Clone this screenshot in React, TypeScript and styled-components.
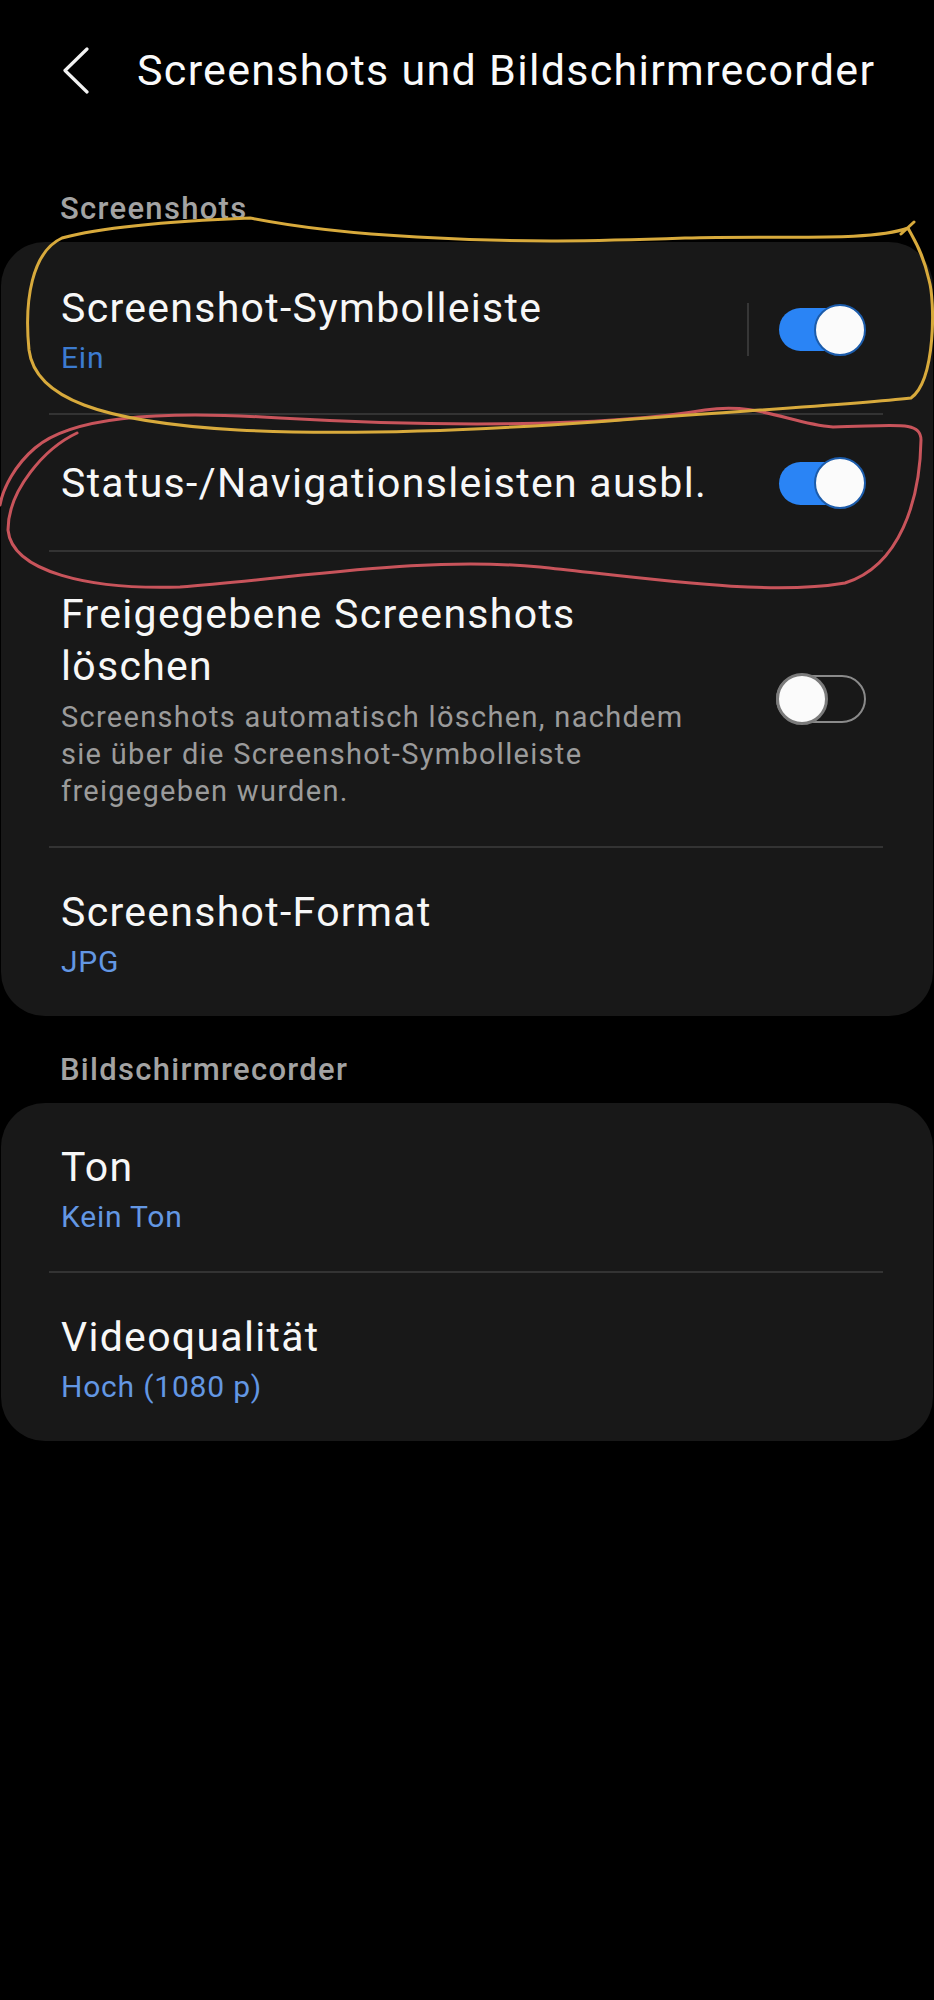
import React from 'react';
import styled, { createGlobalStyle } from 'styled-components';

const GlobalStyle = createGlobalStyle`
  html, body {
    margin: 0;
    padding: 0;
    background: #000;
  }
  body {
    font-family: Roboto, "Liberation Sans", Arial, sans-serif;
    -webkit-font-smoothing: antialiased;
  }
`;

const Page = styled.div`
  position: relative;
  min-height: 2000px;
  background: #000;
  color: #f7f7f7;
`;

const Header = styled.header`
  display: flex;
  align-items: center;
  height: 60px;
  padding: 40px 0 0 61px;
`;

const BackButton = styled.button`
  display: flex;
  align-items: center;
  justify-content: center;
  width: 30px;
  height: 48px;
  padding: 0;
  margin-right: 46px;
  border: 0;
  background: none;
  cursor: pointer;
`;

const HeaderTitle = styled.h1`
  margin: 0;
  font-size: 43px;
  line-height: 60px;
  font-weight: 400;
  letter-spacing: 1.3px;
  color: #fafafa;
  white-space: nowrap;
`;

const SectionLabel = styled.h2<{ $top: number }>`
  margin: ${p => p.$top}px 0 13px;
  padding-left: 60px;
  font-size: 31px;
  line-height: 40px;
  font-weight: 500;
  letter-spacing: 1.3px;
  color: #a3a3a3;
`;

const Card = styled.section`
  margin: 0 1px;
  background: #181818;
  border-radius: 44px;
`;

const Row = styled.div<{ $pad: string }>`
  display: flex;
  align-items: center;
  padding: ${p => p.$pad};
  padding-left: 60px;
  padding-right: 67px;
`;

const TextCol = styled.div<{ $narrow?: boolean }>`
  flex: 1;
  min-width: 0;
  ${p => (p.$narrow ? 'max-width: 640px;' : '')}
`;

const Title = styled.div`
  font-size: 41px;
  line-height: 52px;
  letter-spacing: 1.3px;
  color: #f7f7f7;
`;

const Value = styled.div<{ $color?: string }>`
  margin-top: 5px;
  font-size: 30px;
  line-height: 38px;
  letter-spacing: 0.8px;
  color: ${p => p.$color || '#6397e3'};
`;

const Description = styled.div`
  margin-top: 7px;
  font-size: 29px;
  line-height: 37px;
  letter-spacing: 1.3px;
  color: #9b9b9b;
`;

const Divider = styled.div`
  height: 2px;
  margin: 0 50px 0 48px;
  background: #333;
`;

const VDivider = styled.div`
  flex: none;
  width: 2px;
  height: 53px;
  margin-right: 27px;
  background: #363636;
`;

const SwitchBox = styled.span`
  position: relative;
  display: block;
  flex: none;
  width: 90px;
  height: 52px;
  margin-left: auto;
`;

const Track = styled.span<{ $on: boolean }>`
  position: absolute;
  left: ${p => (p.$on ? 3 : 0)}px;
  right: ${p => (p.$on ? 8 : 0)}px;
  top: ${p => (p.$on ? 4.5 : 2)}px;
  bottom: ${p => (p.$on ? 4.5 : 2)}px;
  box-sizing: border-box;
  border-radius: 26px;
  background: ${p => (p.$on ? '#2a84f5' : 'transparent')};
  border: ${p => (p.$on ? 'none' : '2.5px solid #8a8a8a')};
`;

const Knob = styled.span<{ $on: boolean }>`
  position: absolute;
  top: 0;
  ${p => (p.$on ? 'right: 0;' : 'left: 0;')}
  width: 52px;
  height: 52px;
  box-sizing: border-box;
  border-radius: 50%;
  background: #fbfbfb;
  border: ${p => (p.$on ? '2.5px solid #1c5cab' : '3px solid #7b7b7b')};
`;

// hand-drawn marker loops lying over the screenshot
const Markup = styled.svg`
  position: absolute;
  top: 0;
  left: 0;
  pointer-events: none;
`;

const Switch = ({ on }: { on: boolean }) => (
  <SwitchBox role="switch" aria-checked={on}>
    <Track $on={on} />
    <Knob $on={on} />
  </SwitchBox>
);

const ChevronLeft = () => (
  <svg width="30" height="48" viewBox="0 0 30 48" fill="none">
    <path d="M26 3 L4 24.5 L26 46" stroke="#f2f2f2" strokeWidth="3.2" strokeLinecap="round" strokeLinejoin="round" />
  </svg>
);

const Annotations = () => (
  <Markup width="934" height="2000" viewBox="0 0 934 2000" fill="none">
    <path
      d="M77 433 C45 448 8 490 8 530 C12 572 90 590 180 587 C300 578 420 556 540 567 C660 580 770 596 845 583 C900 566 920 500 921 440 C921 420 895 426 833 427 C790 424 760 402 705 410 C600 428 420 426 280 418 C150 410 70 418 35 448 C15 465 3 488 0 505"
      stroke="#c8545b"
      strokeWidth="3"
      strokeLinecap="round"
      strokeLinejoin="round"
    />
    <path
      d="M908 228 C870 242 780 235 685 238 C600 241 520 243 417 237 C360 234 300 228 250 218 C200 220 110 225 62 238 C32 252 24 300 29 350 C35 398 100 422 238 430 C350 436 480 430 595 422 C720 412 850 405 911 398 C936 380 935 300 929 280 C923 252 913 238 908 228 M901 234 L914 222"
      stroke="#d8aa3c"
      strokeWidth="3"
      strokeLinecap="round"
      strokeLinejoin="round"
    />
  </Markup>
);

const TWO_LINE = '38px 0 35px';

export default function App() {
  return (
    <Page>
      <GlobalStyle />
      <Header>
        <BackButton aria-label="Zurück">
          <ChevronLeft />
        </BackButton>
        <HeaderTitle>Screenshots und Bildschirmrecorder</HeaderTitle>
      </Header>

      <SectionLabel $top={89}>Screenshots</SectionLabel>
      <Card>
        <Row $pad="40px 0 36px">
          <TextCol>
            <Title>Screenshot-Symbolleiste</Title>
            <Value $color="#3c7bd0">Ein</Value>
          </TextCol>
          <VDivider />
          <Switch on />
        </Row>
        <Divider />
        <Row $pad="42px 0 41px">
          <TextCol>
            <Title>Status-/Navigationsleisten ausbl.</Title>
          </TextCol>
          <Switch on />
        </Row>
        <Divider />
        <Row $pad="36px 0 36px">
          <TextCol $narrow>
            <Title>Freigegebene Screenshots löschen</Title>
            <Description>
              Screenshots automatisch löschen, nachdem sie über die Screenshot-Symbolleiste freigegeben wurden.
            </Description>
          </TextCol>
          <Switch on={false} />
        </Row>
        <Divider />
        <Row $pad={TWO_LINE}>
          <TextCol>
            <Title>Screenshot-Format</Title>
            <Value>JPG</Value>
          </TextCol>
        </Row>
      </Card>

      <SectionLabel $top={34}>Bildschirmrecorder</SectionLabel>
      <Card>
        <Row $pad={TWO_LINE}>
          <TextCol>
            <Title>Ton</Title>
            <Value>Kein Ton</Value>
          </TextCol>
        </Row>
        <Divider />
        <Row $pad={TWO_LINE}>
          <TextCol>
            <Title>Videoqualität</Title>
            <Value>Hoch (1080 p)</Value>
          </TextCol>
        </Row>
      </Card>

      <Annotations />
    </Page>
  );
}
